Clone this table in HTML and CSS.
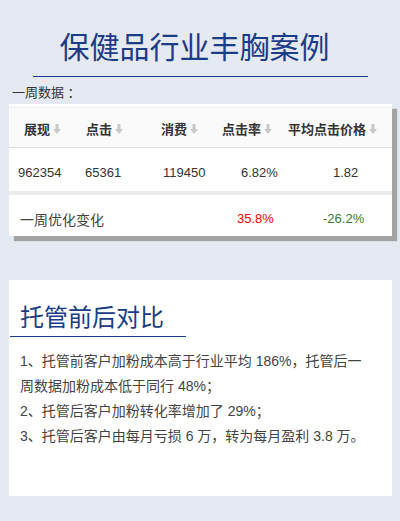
FILE: index.html
```html
<!DOCTYPE html>
<html lang="zh-CN">
<head>
<meta charset="utf-8">
<link rel="stylesheet" href="styles.css">
</head>
<body>
<div class="page">
  <h1 class="title">保健品行业丰胸案例</h1>
  <div class="caption">一周数据 ：</div>
  <div class="table-card">
    <div class="row head">
      <div class="cell c1">展现<svg class="arr" viewBox="0 0 8 10"><path d="M2.5 0h3v5h2.5l-4 5-4-5h2.5z"/></svg></div>
      <div class="cell c2">点击<svg class="arr" viewBox="0 0 8 10"><path d="M2.5 0h3v5h2.5l-4 5-4-5h2.5z"/></svg></div>
      <div class="cell c3">消费<svg class="arr" viewBox="0 0 8 10"><path d="M2.5 0h3v5h2.5l-4 5-4-5h2.5z"/></svg></div>
      <div class="cell c4">点击率<svg class="arr" viewBox="0 0 8 10"><path d="M2.5 0h3v5h2.5l-4 5-4-5h2.5z"/></svg></div>
      <div class="cell c5">平均点击价格<svg class="arr" viewBox="0 0 8 10"><path d="M2.5 0h3v5h2.5l-4 5-4-5h2.5z"/></svg></div>
    </div>
    <div class="row data">
      <div class="cell d1">962354</div>
      <div class="cell d2">65361</div>
      <div class="cell d3">119450</div>
      <div class="cell d4">6.82%</div>
      <div class="cell d5">1.82</div>
    </div>
    <div class="row change">
      <div class="cell label">一周优化变化</div>
      <div class="cell up">35.8%</div>
      <div class="cell down">-26.2%</div>
    </div>
  </div>
  <div class="compare-card">
    <h2 class="sub-title">托管前后对比</h2>
    <p class="item">1、托管前客户加粉成本高于行业平均 186%，托管后一<br>周数据加粉成本低于同行 48%；</p>
    <p class="item">2、托管后客户加粉转化率增加了 29%；</p>
    <p class="item">3、托管后客户由每月亏损 6 万，转为每月盈利 3.8 万。</p>
  </div>
</div>
</body>
</html>
```
FILE: styles.css
```css
* { box-sizing: border-box; }
html, body { margin: 0; padding: 0; }
body {
  background: #e5e9f1;
  font-family: "Liberation Sans", "Noto Sans CJK SC", sans-serif;
  color: #333;
  width: 400px;
  height: 521px;
  overflow: hidden;
}
.page { padding-top: 28px; }
.title {
  margin: 0 32px 0 33px;
  padding: 0 12px 8px 0;
  font-size: 30px;
  line-height: 40px;
  font-weight: normal;
  color: #1b3c86;
  text-align: center;
  border-bottom: 1px solid #1b3c86;
}
.caption {
  margin: 6px 0 0 12px;
  font-size: 13px;
  line-height: 20px;
  color: #333;
}
.table-card {
  margin: 1px 0 0 9px;
  width: 383px;
  background: #fff;
  padding-top: 3px;
  box-shadow: 5px 5px 1px #a3a3a3;
}
.row { display: flex; align-items: center; }
.head {
  height: 41px;
  background: #fafafa;
  border-top: 1px solid #eceef2;
  border-bottom: 1px solid #dcdcdc;
  font-size: 13px;
  font-weight: bold;
  color: #333;
  padding-top: 2px;
}
.cell { flex: none; display: flex; align-items: center; }
.arr { width: 8px; height: 10px; margin-left: 3px; fill: #c8c8c8; }
.c1 { margin-left: 15px; width: 62px; }
.c2 { width: 75px; }
.c3 { width: 61px; }
.c4 { width: 66px; }
.data {
  height: 37px;
  font-size: 13px;
  color: #333;
  border-bottom: 4px solid #ebebeb;
  box-sizing: content-box;
  padding-top: 6px;
}
.d1 { margin-left: 9px; width: 67px; }
.d2 { width: 78px; }
.d3 { width: 78px; }
.d4 { width: 92px; }
.change {
  height: 41px;
  font-size: 14px;
  padding-top: 6px;
}
.label { margin-left: 11px; width: 217px; color: #444; }
.up { color: #f00; width: 86px; font-size: 13px; }
.down { color: #3c7a2c; font-size: 13px; }
.compare-card {
  margin: 44px 0 0 9px;
  width: 383px;
  height: 216px;
  background: #fff;
  padding-top: 22px;
}
.sub-title {
  margin: 0 0 0 1px;
  padding: 0 0 2px 10px;
  width: 176px;
  font-size: 24px;
  line-height: 32px;
  font-weight: normal;
  color: #1b3c86;
  border-bottom: 1px solid #1b3c86;
}
.item {
  margin: 0;
  padding: 0 4px 0 11px;
  font-size: 14px;
  line-height: 25px;
  color: #444;
}
.sub-title + .item { margin-top: 12px; }
```
